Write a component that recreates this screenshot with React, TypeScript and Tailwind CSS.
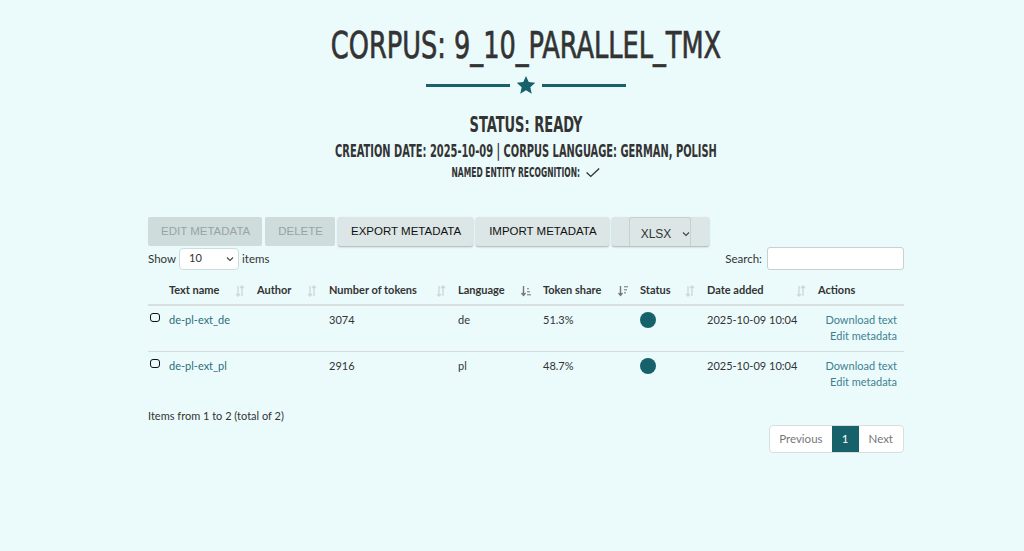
import React from "react";

const teal = "#17616b";

function SortIcon({ active }: { active?: "asc" | "desc" }) {
  if (active) {
    return (
      <svg width="10" height="12" viewBox="0 0 10 12" className="shrink-0">
        <path d="M2.5 1v9M0.5 8l2 2.5 2-2.5" stroke="#777" strokeWidth="1.4" fill="none" />
        {active === "asc" ? (
          <g fill="#999">
            <rect x="6" y="9" width="4" height="1.4" />
            <rect x="6" y="6" width="3" height="1.4" />
            <rect x="6" y="3" width="2" height="1.4" />
          </g>
        ) : (
          <g fill="#999">
            <rect x="6" y="1" width="4" height="1.4" />
            <rect x="6" y="4" width="3" height="1.4" />
            <rect x="6" y="7" width="2" height="1.4" />
          </g>
        )}
      </svg>
    );
  }
  return (
    <svg width="10" height="12" viewBox="0 0 10 12" className="shrink-0">
      <path d="M3 1v10M1 9l2 2 2-2M7 11V1M5 3l2-2 2 2" stroke="#d0d6d6" strokeWidth="1.3" fill="none" />
    </svg>
  );
}

function Chevron() {
  return (
    <svg width="8" height="6" viewBox="0 0 8 6" className="shrink-0">
      <path d="M1 1.5l3 3 3-3" stroke="#444" strokeWidth="1.1" fill="none" />
    </svg>
  );
}

const rows = [
  { name: "de-pl-ext_de", tokens: "3074", lang: "de", share: "51.3%", date: "2025-10-09 10:04" },
  { name: "de-pl-ext_pl", tokens: "2916", lang: "pl", share: "48.7%", date: "2025-10-09 10:04" },
];

const columns: [string, number, "asc" | "desc" | undefined][] = [
  ["Text name", 88, undefined],
  ["Author", 72, undefined],
  ["Number of tokens", 129, undefined],
  ["Language", 85, "asc"],
  ["Token share", 97, "desc"],
  ["Status", 67, undefined],
  ["Date added", 111, undefined],
];

export default function App() {
  const head = { fontFamily: '"DejaVu Sans Condensed", "DejaVu Sans", sans-serif' };
  return (
    <div
      className="min-h-[551px] w-full bg-[#ebfbfb] text-[#333]"
      style={{ fontFamily: "Lato, sans-serif" }}
    >
      <div className="ml-[148px] w-[756px] pt-[25px]">
        <h1
          className="scale-x-[0.75] text-center text-[38px] leading-[40px] text-[#333] [-webkit-text-stroke:0.7px_#333]"
          style={head}
        >
          CORPUS: 9_10_PARALLEL_TMX
        </h1>
        <div className="mt-[10px] flex items-center justify-center gap-[6px]">
          <div className="h-[3px] w-[84px] bg-[#17616b]" />
          <svg width="20" height="20" viewBox="0 0 24 23">
            <path
              d="M12 0.8l3.3 7.2 7.8 0.8-5.9 5.3 1.7 7.8L12 17.9 5.1 21.9l1.7-7.8L0.9 8.8l7.8-0.8z"
              fill={teal}
            />
          </svg>
          <div className="h-[3px] w-[84px] bg-[#17616b]" />
        </div>
        <div className="mt-[18px] scale-x-[0.69] text-center text-[21px] leading-[24px] font-bold" style={head}>
          STATUS: READY
        </div>
        <div className="mt-[4px] scale-x-[0.61] text-center text-[18px] leading-[20px] font-bold" style={head}>
          CREATION DATE: 2025-10-09 | CORPUS LANGUAGE: GERMAN, POLISH
        </div>
        <div
          className="mt-[3px] flex scale-x-[0.6] items-center justify-center gap-[10px] text-[14px] leading-[16px] font-bold"
          style={head}
        >
          NAMED ENTITY RECOGNITION:
          <svg width="24" height="11" viewBox="0 0 24 11" preserveAspectRatio="none">
            <path d="M1 5.5l7 4 14-8" stroke="#333" strokeWidth="1.5" fill="none" />
          </svg>
        </div>

        <div
          className="mt-[37px] flex h-[29px] items-stretch gap-[3px] text-[11.5px]"
          style={{ fontFamily: '"Liberation Sans", Arial, sans-serif' }}
        >
          <div className="flex items-center rounded-[2px] bg-[#cfdcdc] pl-[13px] pr-[12px] text-[#98a4a4]">
            EDIT METADATA
          </div>
          <div className="flex items-center rounded-[2px] bg-[#cfdcdc] pl-[13px] pr-[12px] text-[#98a4a4]">
            DELETE
          </div>
          <div className="flex items-center rounded-[2px] bg-[#dce6e6] pl-[13px] pr-[12px] text-[#111] shadow-[0_1px_2px_rgba(0,0,0,0.3)]">
            EXPORT METADATA
          </div>
          <div className="flex items-center rounded-[2px] bg-[#dce6e6] pl-[13px] pr-[12px] text-[#111] shadow-[0_1px_2px_rgba(0,0,0,0.3)]">
            IMPORT METADATA
          </div>
          <div className="flex items-stretch rounded-[2px] bg-[#dce6e6] pl-[17px] pr-[18px] shadow-[0_1px_2px_rgba(0,0,0,0.3)]">
            <div className="flex w-[62px] items-center rounded-t-[3px] border border-b-0 border-[#c6d0d0] pl-[11px] pt-[4px] text-[12px] text-[#333]">
              XLSX
              <span className="ml-[11px]">
                <Chevron />
              </span>
            </div>
          </div>
        </div>

        <div className="mt-[1px] flex items-center justify-between text-[11.5px]">
          <div className="flex items-center gap-[3px]">
            Show
            <div className="flex h-[22px] w-[60px] items-center justify-between rounded-[4px] border border-[#cdd] bg-white pl-[9px] pr-[4px] text-[11px]">
              10
              <Chevron />
            </div>
            items
          </div>
          <div className="flex items-center gap-[5px]">
            Search:
            <div className="h-[23px] w-[137px] rounded-[3px] border border-[#c8d0d0] bg-white" />
          </div>
        </div>

        <table className="mt-[10px] w-full border-collapse text-[11px]">
          <thead>
            <tr className="border-b-2 border-[#d9dede] text-left font-bold">
              <th className="w-[21px]" />
              {columns.map(([label, w, a]) => (
                <th key={label} className="h-[25px] pb-[3px] pr-[12px]" style={{ width: w }}>
                  <div className="flex items-center justify-between">
                    <span>{label}</span>
                    <SortIcon active={a} />
                  </div>
                </th>
              ))}
              <th className="pb-[3px]">Actions</th>
            </tr>
          </thead>
          <tbody>
            {rows.map((r, i) => (
              <tr key={r.name} className={i === 0 ? "border-b border-[#d6dcdc]" : ""}>
                <td className="h-[46px] pl-[2px] pt-[7px] align-top">
                  <div className="h-[9px] w-[10px] rounded-[3px] border-[1.5px] border-[#111]" />
                </td>
                <td className="pt-[6px] align-top text-[#2c6e7c]">{r.name}</td>
                <td />
                <td className="pt-[6px] align-top">{r.tokens}</td>
                <td className="pt-[6px] align-top">{r.lang}</td>
                <td className="pt-[6px] align-top">{r.share}</td>
                <td className="pt-[6px] align-top">
                  <div className="h-[16px] w-[16px] rounded-full bg-[#17616b]" />
                </td>
                <td className="pt-[6px] align-top">{r.date}</td>
                <td className="pr-[7px] pt-[6px] text-right align-top leading-[16px] text-[#3f7f92]">
                  <div>Download text</div>
                  <div>Edit metadata</div>
                </td>
              </tr>
            ))}
          </tbody>
        </table>

        <div className="mt-[11px] text-[11px]">Items from 1 to 2 (total of 2)</div>

        <div className="mt-[0px] flex justify-end">
          <div className="flex h-[28px] overflow-hidden rounded-[4px] border border-[#d8dede] bg-white text-[11.5px]">
            <div className="flex items-center px-[9px] text-[#777]">Previous</div>
            <div className="flex w-[27px] items-center justify-center bg-[#17616b] text-white">1</div>
            <div className="flex items-center px-[10px] text-[#777]">Next</div>
          </div>
        </div>
      </div>
    </div>
  );
}
